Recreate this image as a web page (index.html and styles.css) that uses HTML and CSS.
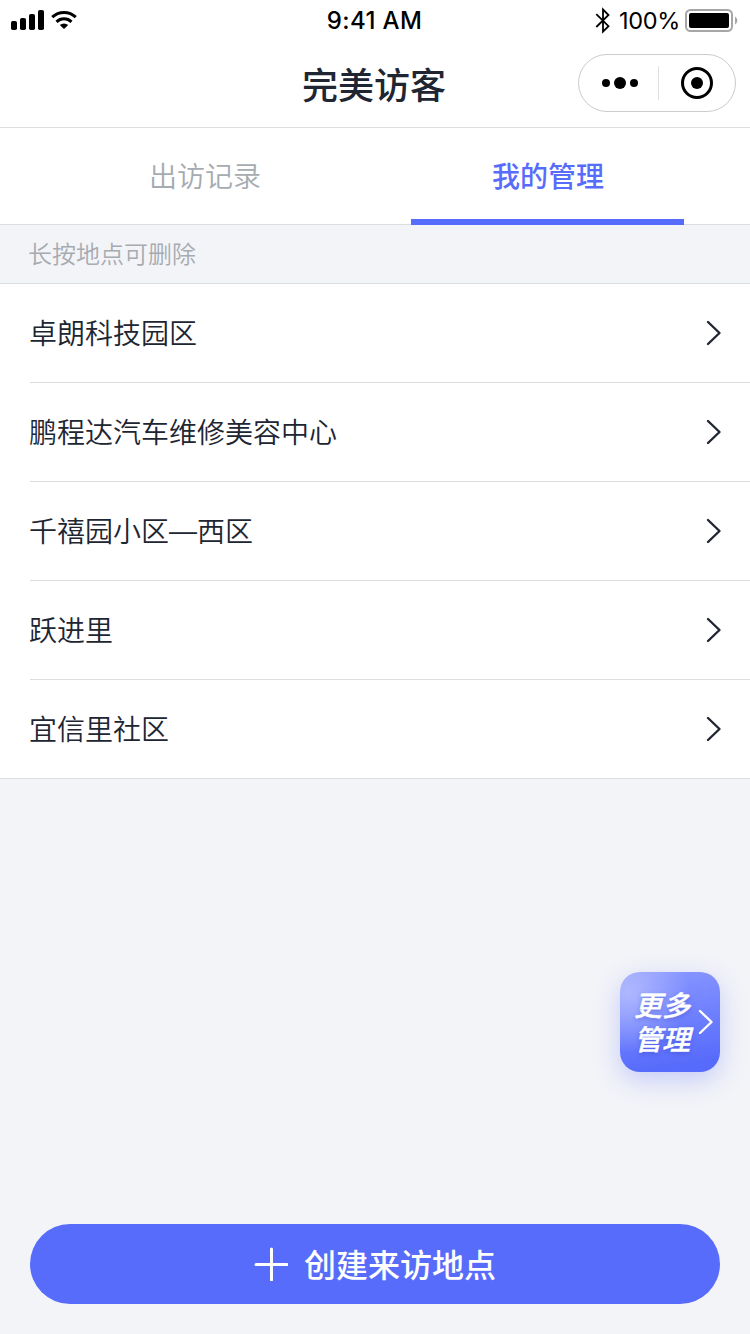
FILE: index.html
```html
<!DOCTYPE html>
<html lang="zh-CN">
<head>
  <meta charset="UTF-8">
  <meta name="viewport" content="width=device-width, initial-scale=1.0">
  <title>完美访客</title>
  <link rel="stylesheet" href="styles.css">
</head>
<body>
  <div class="page">
    <div class="status-bar">
      <div class="status-left">
        <svg width="68" height="24" viewBox="0 0 68 24">
          <rect x="1" y="12" width="6" height="9" rx="1.8"/>
          <rect x="10" y="9" width="6" height="12" rx="1.8"/>
          <rect x="19" y="5" width="6" height="16" rx="1.8"/>
          <rect x="28" y="1" width="6" height="20" rx="1.8"/>
          <path d="M42.2 8.2a17 17 0 0 1 23.6 0" fill="none" stroke="#000" stroke-width="3"/>
          <path d="M46.5 12.8a11 11 0 0 1 15 0" fill="none" stroke="#000" stroke-width="3"/>
          <path d="M54 20l-4.2-3.9a6.2 6.2 0 0 1 8.4 0z"/>
        </svg>
      </div>
      <div class="status-time">9:41 AM</div>
      <div class="status-right">
        <svg width="16" height="28" viewBox="0 0 16 28">
          <path d="M1.3 7.2l12.2 12L8 24.7V2.5L13.5 8 1.3 20" fill="none" stroke="#000" stroke-width="1.8"/>
        </svg>
        <span class="battery-text">100%</span>
        <svg width="54" height="24" viewBox="0 0 54 24">
          <rect x="1" y="1" width="46" height="21" rx="4.5" fill="none" stroke="#a6a6a6" stroke-width="2"/>
          <rect x="4" y="4" width="40" height="15" rx="2"/>
          <path d="M50 7.5a4.6 4.6 0 0 1 0 8z" fill="#a6a6a6"/>
        </svg>
      </div>
    </div>

    <header class="navbar">
      <h1>完美访客</h1>
      <div class="capsule">
        <svg width="156" height="56" viewBox="0 0 156 56">
          <circle cx="27" cy="28" r="4"/>
          <circle cx="41" cy="28" r="6"/>
          <circle cx="55" cy="28" r="4"/>
          <path d="M79.5 11v34" stroke="#e0e0e0"/>
          <circle cx="118" cy="28" r="14.5" fill="none" stroke="#000" stroke-width="3"/>
          <circle cx="118" cy="28" r="6"/>
        </svg>
      </div>
    </header>

    <nav class="tabs">
      <div class="tab">出访记录</div>
      <div class="tab active">我的管理</div>
    </nav>

    <p class="hint">长按地点可删除</p>

    <ul class="place-list">
      <li class="place">
        <span>卓朗科技园区</span>
        <svg class="arrow" width="16" height="26" viewBox="0 0 16 26"><path d="M2 2l11.5 11L2 24"/></svg>
      </li>
      <li class="place">
        <span>鹏程达汽车维修美容中心</span>
        <svg class="arrow" width="16" height="26" viewBox="0 0 16 26"><path d="M2 2l11.5 11L2 24"/></svg>
      </li>
      <li class="place">
        <span>千禧园小区<i class="dash">—</i>西区</span>
        <svg class="arrow" width="16" height="26" viewBox="0 0 16 26"><path d="M2 2l11.5 11L2 24"/></svg>
      </li>
      <li class="place">
        <span>跃进里</span>
        <svg class="arrow" width="16" height="26" viewBox="0 0 16 26"><path d="M2 2l11.5 11L2 24"/></svg>
      </li>
      <li class="place">
        <span>宜信里社区</span>
        <svg class="arrow" width="16" height="26" viewBox="0 0 16 26"><path d="M2 2l11.5 11L2 24"/></svg>
      </li>
    </ul>

    <div class="footer">
      <button class="btn" type="button">
        <svg width="34" height="34" viewBox="0 0 34 34"><path d="M2 17.5h31M17.5 2v31"/></svg>
        <span>创建来访地点</span>
      </button>
    </div>

    <!-- floating shortcut -->
    <a class="more">
      <span>更多<br>管理</span>
      <svg width="16" height="26" viewBox="0 0 16 26"><path d="M2 2l11.5 11L2 24"/></svg>
    </a>
  </div>
</body>
</html>
```

FILE: styles.css
```css
body {
  margin: 0;
  font-family: "Noto Sans CJK SC", sans-serif;
  color: #202532;
  background-color: #f3f4f8;
}

svg {
  display: block;
}

.page {
  position: relative;
  display: flex;
  flex-direction: column;
  width: 750px;
  height: 1334px;
  overflow: hidden;
}

.status-bar {
  display: grid;
  grid-template-columns: 1fr auto 1fr;
  align-items: center;
  height: 40px;
  padding: 0 11px 0 10px;
  box-sizing: border-box;
  background: #fff;
  color: #000;
  font-family: Inter, sans-serif;
  font-size: 24px;
  line-height: 42px;
}

.status-time {
  font-weight: 500;
  letter-spacing: 0.4px;
}

.status-right {
  display: flex;
  justify-content: flex-end;
  align-items: center;
}

.battery-text {
  margin: 0 5px 0 8px;
  font-size: 23.5px;
  letter-spacing: -0.3px;
}

.navbar {
  display: grid;
  grid-template-columns: 1fr auto 1fr;
  height: 88px;
  box-sizing: border-box;
  padding: 0 14px;
  background: #fff;
  border-bottom: 1px solid #dcdde0;
}

h1 {
  grid-column: 2;
  margin: 0 0 0 -2px;
  font-size: 36px;
  font-weight: 500;
  line-height: 86px;
}

.capsule {
  justify-self: end;
  width: 156px;
  height: 56px;
  margin-top: 14px;
  border: 1px solid #cbcbcb;
  border-radius: 29px;
}

.tabs {
  display: flex;
  gap: 70px;
  height: 97px;
  box-sizing: border-box;
  padding-left: 68px;
  background: #fff;
  border-bottom: 1px solid #dcdde0;
}

.tab {
  width: 273px;
  height: 97px;
  box-sizing: border-box;
  padding-left: 1px;
  color: #a5abb1;
  font-size: 28px;
  font-weight: 350;
  line-height: 95px;
  text-align: center;
}

.tab.active {
  color: #586cfc;
  font-weight: 500;
  border-bottom: 6px solid #586cfc;
}

.hint {
  margin: 0;
  padding-left: 28px;
  height: 58px;
  color: #a7abb0;
  font-size: 24px;
  font-weight: 350;
  line-height: 56px;
  border-bottom: 1px solid #dcdde0;
}

.place-list {
  margin: 0;
  padding: 0 0 0 30px;
  list-style: none;
  background: #fff;
  border-bottom: 1px solid #dcdde0;
}

.place {
  display: flex;
  justify-content: space-between;
  align-items: center;
  height: 98px;
  padding-right: 28px;
  font-size: 28px;
  font-weight: 350;
}

.place + .place {
  border-top: 1px solid #dcdde0;
}

.place span {
  height: 98px;
  margin-left: -1px;
  line-height: 96px;
}

.dash {
  font-family: "Liberation Sans", sans-serif;
  font-style: normal;
  line-height: 1;
  vertical-align: 2px;
}

.arrow path {
  fill: none;
  stroke: #202532;
  stroke-width: 2.4;
  stroke-linecap: round;
  stroke-linejoin: round;
}

.footer {
  margin-top: auto;
  padding: 0 30px 30px;
}

.btn {
  display: flex;
  justify-content: center;
  align-items: center;
  gap: 16px;
  width: 100%;
  height: 80px;
  padding: 0;
  border: none;
  border-radius: 40px;
  background: #586cfc;
  color: #fff;
  font-family: inherit;
  font-size: 32px;
  font-weight: 500;
}

.btn span {
  height: 80px;
  line-height: 78px;
}

.btn path {
  fill: none;
  stroke: #fff;
  stroke-width: 3;
  stroke-linecap: round;
}

.more {
  position: absolute;
  right: 30px;
  top: 972px;
  display: flex;
  align-items: center;
  gap: 8px;
  width: 100px;
  height: 100px;
  padding-left: 14px;
  box-sizing: border-box;
  border-radius: 20px;
  background:
    radial-gradient(circle at 8% 20%, rgba(190, 198, 255, 0.75), rgba(190, 198, 255, 0) 50%),
    linear-gradient(170deg, #8b99ff, #566afb 90%);
  box-shadow: 0 8px 26px rgba(88, 108, 252, 0.3);
  color: #fff;
  font-size: 28px;
  font-weight: 500;
  font-style: italic;
  line-height: 34px;
  text-shadow: 0 2px 4px rgba(50, 65, 190, 0.45);
  -webkit-text-stroke: 0.4px #fff;
}

.more span {
  margin-top: -2px;
}

.more path {
  fill: none;
  stroke: #fff;
  stroke-width: 2.4;
  stroke-linecap: round;
  stroke-linejoin: round;
}
```
